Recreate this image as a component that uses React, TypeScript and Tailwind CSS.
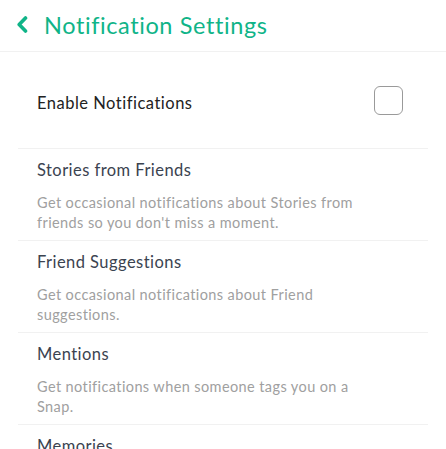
import React from "react";

type Item = {
  title: string;
  description: string;
};

const items: Item[] = [
  {
    title: "Stories from Friends",
    description: "Get occasional notifications about Stories from friends so you don't miss a moment.",
  },
  {
    title: "Friend Suggestions",
    description: "Get occasional notifications about Friend suggestions.",
  },
  {
    title: "Mentions",
    description: "Get notifications when someone tags you on a Snap.",
  },
  {
    title: "Memories",
    description: "Get notifications about your Memories from this day.",
  },
];

export default function App() {
  const [enabled, setEnabled] = React.useState(false);

  return (
    <div className="h-[449px] w-full overflow-hidden bg-white font-['Lato','Noto_Sans',sans-serif]">
      <header className="flex h-[52px] items-center border-b border-[#f1f1f1] pl-4">
        <svg width="12" height="17" viewBox="0 0 12 17" className="mb-[2px]">
          <path d="M9.5 2 L3.2 8.5 L9.5 15" fill="none" stroke="#10b488" strokeWidth="3.6" strokeLinecap="round" strokeLinejoin="round" />
        </svg>
        <h1 className="ml-[16px] text-[23.5px] leading-none tracking-[0.6px] text-[#10b488]">Notification Settings</h1>
      </header>

      <div className="mx-[18px]">
        <div className="flex h-[97px] items-center justify-between border-b border-[#f1f1f1] pl-[19px] pr-[25px]">
          <span className="pt-[6px] text-[16.5px] leading-6 tracking-[0.5px] text-[#222222]">Enable Notifications</span>
          <button
            type="button"
            aria-pressed={enabled}
            onClick={() => setEnabled(!enabled)}
            className="h-[29px] w-[29px] rounded-[6px] border-[1.5px] border-[#9a9a9a] bg-white"
          />
        </div>

        {items.map((item) => (
          <div key={item.title} className="border-b border-[#f1f1f1] pb-[7px] pl-[19px] pr-[60px] pt-[9px]">
            <div className="text-[16.5px] leading-6 tracking-[0.45px] text-[#3b4350]">{item.title}</div>
            <p className="mt-[11px] text-[14.5px] leading-5 tracking-[0.4px] text-[#a0a0a0]">{item.description}</p>
          </div>
        ))}
      </div>
    </div>
  );
}
